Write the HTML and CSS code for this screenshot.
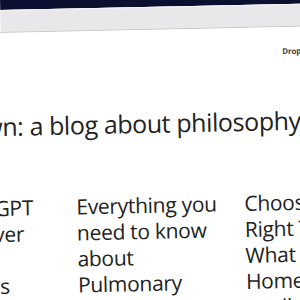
FILE: index.html
```html
<!DOCTYPE html>
<html lang="en">

<head>
    <meta charset="UTF-8">
    <meta name="viewport" content="width=device-width, initial-scale=1.0">
    <title>The Unknown</title>
    <link rel="stylesheet" href="styles.css">
</head>

<body>
    <section class="frame">
        <section class="sky"></section>
        <section class="toolbar"></section>
        <section class="page">
            <section class="topnav">
                <span>Drop Us a Line</span>
            </section>
            <section class="title">
                <h1>Into the Unknown: a blog about philosophy</h1>
            </section>
            <section class="posts">
                <section class="post">
                    <span>Can ChatGPT Live Forever among Databases</span>
                </section>
                <section class="post">
                    <span>Everything you need to know about Pulmonary Embolism</span>
                </section>
                <section class="post">
                    <span>Choosing the Right Tiles: What Every Homeowner Really Needs</span>
                </section>
            </section>
        </section>
    </section>
</body>

</html>
```

FILE: styles.css
```css
body {
    margin: 0;
    padding: 0;
    overflow: hidden;
    height: 100vh;
    width: 100vw;
    background-color: white;
    font-family: "Open Sans", "DejaVu Sans", sans-serif;
    color: #222;
}

.frame {
    width: 520px;
    margin-top: -2px;
    transform: rotate(-1.2deg);
    transform-origin: 0 0;
}

.sky {
    height: 12px;
    background-color: #0b1030;
    background-image:
        radial-gradient(circle at 163px 4px, #7a80a8 0.8px, transparent 1.2px),
        radial-gradient(circle at 243px 6px, #6a709a 0.8px, transparent 1.2px);
}

.toolbar {
    height: 21px;
    background-color: #e8e8ea;
    border-top: 1px solid #f4f4f6;
    border-bottom: 1px solid #c9c9cd;
}

.page {
    background-color: white;
    height: 400px;
}

.topnav {
    display: flex;
    padding-top: 18px;
    padding-left: 281px;
    height: 12px;
}

.topnav span {
    font-size: 8px;
    font-weight: 700;
    color: #444;
    white-space: nowrap;
    letter-spacing: -0.2px;
}

.title {
    display: flex;
    justify-content: flex-end;
    width: 298px;
    margin-top: 48px;
}

.title h1 {
    margin: 0;
    font-size: 25px;
    font-weight: 400;
    line-height: 30px;
    white-space: nowrap;
    letter-spacing: -0.4px;
}

.posts {
    display: flex;
    gap: 13px;
    margin-top: 54px;
    margin-left: -96px;
}

.post {
    width: 155px;
    flex-shrink: 0;
    font-size: 21px;
    line-height: 26px;
    letter-spacing: -0.3px;
}
```
